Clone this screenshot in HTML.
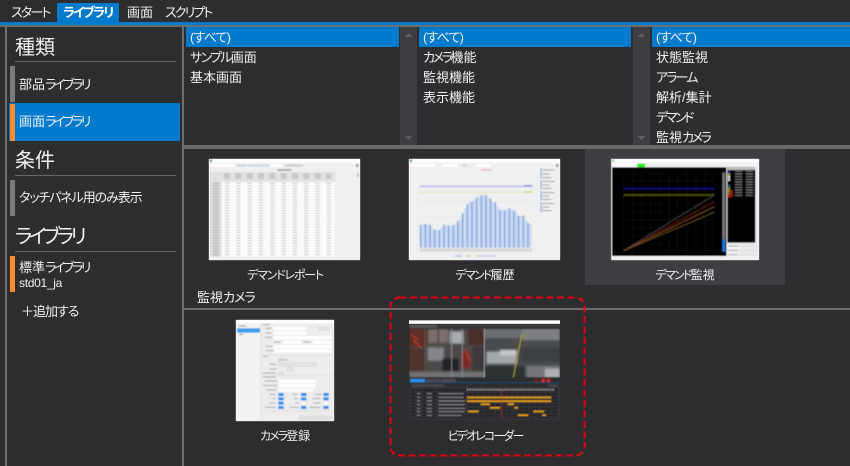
<!DOCTYPE html>
<html lang="ja"><head><meta charset="utf-8"><title>ライブラリ</title>
<style>
html,body{margin:0;padding:0;width:850px;height:466px;overflow:hidden;background:#2d2d30}
#a{position:relative;width:850px;height:466px;overflow:hidden;background:#2d2d30;color:#f1f1f1;font-family:"Liberation Sans","Noto Sans CJK JP",sans-serif;font-size:13px;font-feature-settings:"palt";}
.r{position:absolute}
.t{position:absolute;white-space:nowrap;line-height:20px;height:20px;margin-top:1px}
.h{font-size:20px;line-height:30px;height:30px}
.c{transform:translateX(-50%);font-size:12px}
.l{background:#686868;height:1px;left:15px;width:161px;position:absolute}
.k{letter-spacing:-2.4px}
.k2{letter-spacing:-1.7px}
svg{position:absolute;left:0;top:0}
</style></head><body><div id="a">
<div class="r" style="left:57px;top:3px;width:62px;height:19px;background:#007acc"></div>
<div class="r" style="left:0;top:22px;width:850px;height:3px;background:#007acc"></div>
<div class="r" style="left:0;top:25px;width:850px;height:2px;background:#6e6e6e"></div>
<div class="t" style="left:11px;top:2px;letter-spacing:-1.8px">スタート</div>
<div class="t" style="left:63px;top:2px;font-weight:700;color:#fff;letter-spacing:-1.8px">ライブラリ</div>
<div class="t" style="left:127px;top:2px">画面</div>
<div class="t" style="left:165px;top:2px;letter-spacing:-1.9px">スクリプト</div>

<div class="r" style="left:5px;top:27px;width:2px;height:439px;background:#6e6e6e"></div>
<div class="r" style="left:182px;top:27px;width:2px;height:439px;background:#6e6e6e"></div>

<div class="t h" style="left:15px;top:32px">種類</div><div class="l" style="top:61px"></div>
<div class="r" style="left:10px;top:66px;width:5px;height:36px;background:#7a7a7a"></div>
<div class="t" style="left:19px;top:74px">部品<span class="k">ライブラリ</span></div>
<div class="r" style="left:9px;top:103px;width:171px;height:38px;background:#007acc"></div>
<div class="r" style="left:10px;top:104px;width:5px;height:37px;background:#ff8c32"></div>
<div class="t" style="left:19px;top:111px">画面<span class="k">ライブラリ</span></div>
<div class="t h" style="left:15px;top:145px">条件</div><div class="l" style="top:175px"></div>
<div class="r" style="left:10px;top:180px;width:5px;height:36px;background:#7a7a7a"></div>
<div class="t" style="left:19px;top:187px;letter-spacing:-1.1px">タッチパネル用のみ表示</div>
<div class="t h" style="left:15px;top:221px;letter-spacing:-3.6px">ライブラリ</div><div class="l" style="top:251px"></div>
<div class="r" style="left:10px;top:256px;width:5px;height:36px;background:#ff8c32"></div>
<div class="t" style="left:19px;top:257px">標準<span class="k">ライブラリ</span></div>
<div class="t" style="left:19px;top:272px;font-size:12px;letter-spacing:-.3px">std01_ja</div>
<div class="t" style="left:21px;top:301px;letter-spacing:-1px">＋追加する</div>

<div class="r" style="left:186px;top:27px;width:213px;height:20px;background:#007acc"></div>
<div class="r" style="left:419px;top:27px;width:212px;height:20px;background:#007acc"></div>
<div class="r" style="left:652px;top:27px;width:198px;height:20px;background:#007acc"></div>
<div class="r" style="left:400px;top:27px;width:17px;height:118px;background:#3e3e42"></div>
<div class="r" style="left:633px;top:27px;width:17px;height:118px;background:#3e3e42"></div>
<div class="r" style="left:184px;top:145px;width:666px;height:4px;background:#6a6a6a"></div>
<div class="r" style="left:585px;top:149px;width:200px;height:136px;background:#3e3e42"></div>
<div class="r" style="left:184px;top:308px;width:666px;height:2px;background:#6e6e6e"></div>

<div class="t" style="left:190px;top:27px;letter-spacing:-.8px">(すべて)</div>
<div class="t" style="left:190px;top:47px"><span class="k2">サンプル</span>画面</div>
<div class="t" style="left:190px;top:67px">基本画面</div>
<div class="t" style="left:423px;top:27px;letter-spacing:-.8px">(すべて)</div>
<div class="t" style="left:423px;top:47px"><span class="k">カメラ</span>機能</div>
<div class="t" style="left:423px;top:67px">監視機能</div>
<div class="t" style="left:423px;top:87px">表示機能</div>
<div class="t" style="left:656px;top:27px;letter-spacing:-.8px">(すべて)</div>
<div class="t" style="left:656px;top:47px">状態監視</div>
<div class="t" style="left:656px;top:67px;letter-spacing:-1.8px">アラーム</div>
<div class="t" style="left:656px;top:87px">解析/集計</div>
<div class="t" style="left:656px;top:107px;letter-spacing:-2.4px">デマンド</div>
<div class="r" style="left:652px;top:127px;width:198px;height:18px;overflow:hidden"><div class="t" style="left:4px;top:0">監視<span class="k">カメラ</span></div></div>

<div class="t c" style="left:285px;top:264px;letter-spacing:-1.2px">デマンドレポート</div>
<div class="t c" style="left:485px;top:264px"><span class="k2">デマンド</span>履歴</div>
<div class="t c" style="left:685px;top:264px"><span class="k2">デマンド</span>監視</div>
<div class="t" style="left:197px;top:287px">監視<span style="letter-spacing:-1px">カメラ</span></div>
<div class="t c" style="left:285px;top:425px"><span style="letter-spacing:-1.9px">カメラ</span>登録</div>
<div class="t c" style="left:485px;top:425px;letter-spacing:-1.9px">ビデオレコーダー</div>

<svg width="850" height="466" viewBox="0 0 850 466">
<defs>
<filter id="b" x="-5%" y="-5%" width="110%" height="110%"><feGaussianBlur stdDeviation="1.5"/></filter>
<filter id="p" x="-5%" y="-5%" width="110%" height="110%"><feGaussianBlur stdDeviation="3"/></filter>
<pattern id="tb" width="33.9" height="8.2" patternUnits="userSpaceOnUse" x="65" y="96">
<rect width="33.9" height="8.2" fill="#fbfbfb"/><rect x="10" y="2.5" width="13" height="3" fill="#c6c6c6"/>
</pattern>
<pattern id="lb" width="30" height="8.2" patternUnits="userSpaceOnUse" x="36" y="96">
<rect x="2" y="2" width="20" height="4" fill="#b4b4b4"/>
</pattern>
<clipPath id="c5"><rect x="72" y="116" width="453" height="147"/></clipPath>
</defs>
<g fill="#5d5d62"><path d="M408.5 33l-4 4h8zM408.5 140l-4-4h8zM641.5 33l-4 4h8zM641.5 140l-4-4h8z"/></g>

<!-- thumb 1 -->
<g transform="translate(200,150) scale(.3333)">
<rect x="27" y="27" width="453" height="303" fill="#f0f0f0"/>
<g filter="url(#b)">
<rect x="27" y="27" width="453" height="303" fill="#f0f0f0"/>
<rect x="27" y="27" width="453" height="10" fill="#fff"/><rect x="30" y="29" width="6" height="7" fill="#3a8a4a"/>
<rect x="30" y="42" width="75" height="9" fill="#fff"/>
<rect x="110" y="44" width="30" height="5" fill="#ccc"/>
<rect x="143" y="43" width="72" height="7" fill="#d0d8e4"/>
<rect x="208" y="42" width="40" height="9" fill="#fff"/><rect x="255" y="43" width="55" height="7" fill="#cfcfcf"/>
<rect x="468" y="42" width="7" height="9" fill="#999"/>
<rect x="232" y="57" width="42" height="6" fill="#aaa"/>
<rect x="30" y="66" width="375" height="30" fill="#e2e2e2"/>
<path d="M72 72h320M72 78h320M72 84h320" stroke="#aaa" stroke-width="3" stroke-dasharray="18 16"/>
<rect x="65" y="96" width="339" height="224" fill="url(#tb)"/>
<rect x="30" y="96" width="35" height="224" fill="#e0e0e0"/>
<rect x="36" y="96" width="24" height="224" fill="url(#lb)"/>
<rect x="471" y="68" width="5" height="14" fill="#bbb"/>
</g></g>

<!-- thumb 2 -->
<g transform="translate(400,150) scale(.3333)">
<rect x="27" y="27" width="453" height="303" fill="#f0f0f0"/>
<g filter="url(#b)">
<rect x="27" y="27" width="453" height="303" fill="#f0f0f0"/>
<rect x="27" y="27" width="453" height="10" fill="#fff"/><rect x="30" y="29" width="6" height="7" fill="#3a8a4a"/>
<rect x="30" y="42" width="75" height="9" fill="#fff"/><rect x="128" y="42" width="45" height="9" fill="#fff"/><rect x="186" y="42" width="16" height="9" fill="#ddd"/><rect x="226" y="42" width="45" height="9" fill="#fff"/>
<rect x="243" y="57" width="35" height="5" fill="#f0bcd6"/>
<path d="M58 110h340M58 155h340M58 201h340M58 247h340" stroke="#e2e2e2" stroke-width="1.5"/>
<path d="M58 109h340" stroke="#b4b4f0" stroke-width="4"/>
<path d="M58 127h340" stroke="#dfe8b0" stroke-width="3"/>
<rect x="372" y="105" width="24" height="4" fill="#8f8fe0"/><rect x="372" y="124" width="24" height="4" fill="#c4d680"/>
<path d="M69 293V223M83 293V224M97 293V232M111 293V239M125 293V232M139 293V226M153 293V225M167 293V220M181 293V208M195 293V175M209 293V157M223 293V148M237 293V139M251 293V135M265 293V143M279 293V155M293 293V170M307 293V180M321 293V178M335 293V178M349 293V187M363 293V198M377 293V210M391 293V222" stroke="#c4d6f2" stroke-width="6" fill="none"/>
<path d="M62 293V225M76 293V222M90 293V225M104 293V239M118 293V240M132 293V224M146 293V227M160 293V225M174 293V213M188 293V190M202 293V162M216 293V155M230 293V143M244 293V136M258 293V135M272 293V145M286 293V157M300 293V180M314 293V181M328 293V175M342 293V181M356 293V198M370 293V196M384 293V218" stroke="#7ea4e4" stroke-width="5" fill="none"/>
<rect x="60" y="295" width="336" height="10" fill="#d8d8d8"/>
<rect x="165" y="316" width="20" height="4" fill="#9ab8e8"/><rect x="198" y="316" width="16" height="4" fill="#b8d890"/><rect x="228" y="316" width="60" height="4" fill="#c8c8e8"/>
<g fill="#6f95d6"><rect x="422" y="55" width="3" height="30"/><rect x="422" y="90" width="3" height="28"/><rect x="422" y="123" width="3" height="28"/><rect x="422" y="156" width="3" height="30"/></g>
<path d="M428 60h36M428 72h20M428 83h26M428 94h36M428 105h20M428 115h26M428 128h36M428 138h20M428 148h26M428 161h36M428 171h20M428 182h26" stroke="#9a9a9a" stroke-width="3"/>
<rect x="468" y="42" width="7" height="9" fill="#999"/>
</g></g>

<!-- thumb 3 -->
<g transform="translate(585,150) scale(.3333)">
<rect x="79" y="27" width="443" height="303" fill="#f0f0f0"/>
<g filter="url(#b)">
<rect x="79" y="27" width="443" height="303" fill="#f0f0f0"/>
<rect x="79" y="27" width="443" height="10" fill="#fff"/><rect x="81" y="29" width="6" height="7" fill="#30d040"/>
<rect x="81" y="42" width="74" height="9" fill="#fff"/><rect x="157" y="41" width="23" height="11" fill="#1fe81f"/>
<rect x="81" y="52" width="343" height="266" fill="#000"/>
<path d="M116 70V302M143 70V302M170 70V302M197 70V302M224 70V302M252 70V302M279 70V302M306 70V302M333 70V302M360 70V302M388 70V302M116 70H388M116 93H388M116 140H388M116 163H388M116 187H388M116 210H388M116 233H388M116 257H388M116 280H388M116 302H388" stroke="#1c1c1c" stroke-width="1.5"/>
<path d="M116 116H388" stroke="#0c0c90" stroke-width="4"/>
<path d="M116 135H388" stroke="#4a4a08" stroke-width="5"/>
<path d="M116 302L388 135" stroke="#4d4d4d" stroke-width="2"/>
<path d="M116 302L388 155" stroke="#6e2018" stroke-width="2"/>
<path d="M116 302L388 170" stroke="#905020" stroke-width="2"/>
<path d="M116 302L388 187" stroke="#66581a" stroke-width="2"/>
<rect x="412" y="68" width="8" height="200" fill="#777"/>
<rect x="412" y="268" width="8" height="37" fill="#1e7ee0"/>
<rect x="427" y="52" width="84" height="226" fill="#000"/>
<rect x="427" y="52" width="84" height="8" fill="#bdbdbd"/>
<path d="M450 64h55M450 72h55M450 80h55M450 88h55M450 96h55M450 104h55M450 112h55M450 120h55M450 128h55M450 136h55" stroke="#777" stroke-width="3" stroke-dasharray="22 10"/>
<g><rect x="429" y="62" width="6" height="7" fill="#2020c0"/><rect x="429" y="70" width="6" height="7" fill="#b0b030"/><rect x="429" y="78" width="6" height="7" fill="#eee"/><rect x="429" y="86" width="6" height="7" fill="#ddd"/><rect x="429" y="104" width="6" height="7" fill="#107080"/><rect x="429" y="112" width="6" height="7" fill="#a0a020"/><rect x="429" y="120" width="6" height="7" fill="#c09020"/><rect x="429" y="128" width="6" height="7" fill="#c06020"/><rect x="429" y="136" width="6" height="6" fill="#e02020"/><rect x="438" y="120" width="5" height="22" fill="#a02020"/></g>
<rect x="465" y="284" width="50" height="9" fill="#e4e4e4"/><rect x="465" y="297" width="50" height="9" fill="#e4e4e4"/><rect x="465" y="310" width="50" height="8" fill="#e4e4e4"/>
<path d="M430 288h30M430 301h30M430 314h30" stroke="#aaa" stroke-width="3"/>
</g></g>

<!-- thumb 4 -->
<g transform="translate(190,285) scale(.3333)">
<rect x="138" y="105" width="294" height="303" fill="#f0f0f0"/>
<g filter="url(#b)">
<rect x="138" y="105" width="294" height="303" fill="#ededed"/>
<rect x="138" y="105" width="294" height="10" fill="#fff"/>
<rect x="138" y="115" width="74" height="293" fill="#f3f3f3"/>
<rect x="141" y="130" width="69" height="13" fill="#3a9bf0"/>
<rect x="146" y="121" width="22" height="4" fill="#aaa"/><rect x="148" y="146" width="10" height="4" fill="#999"/>
<g fill="#fff"><rect x="250" y="125" width="100" height="10"/><rect x="250" y="139" width="100" height="10"/><rect x="250" y="153" width="174" height="10"/><rect x="278" y="167" width="55" height="10"/><rect x="368" y="167" width="56" height="10"/><rect x="250" y="180" width="174" height="10"/><rect x="250" y="193" width="174" height="10"/><rect x="266" y="284" width="112" height="10"/><rect x="266" y="297" width="112" height="10"/><rect x="266" y="311" width="102" height="9"/></g>
<g fill="#e2e2e2" stroke="#c8c8c8"><rect x="266" y="233" width="114" height="11"/><rect x="292" y="247" width="18" height="11"/><rect x="265" y="261" width="16" height="8"/><rect x="328" y="393" width="32" height="11"/><rect x="364" y="393" width="26" height="11"/><rect x="393" y="393" width="32" height="11"/><rect x="386" y="127" width="30" height="8"/></g>
<path d="M216 211h212M216 271h212M216 378h216M212 115v293" stroke="#d6d6d6" stroke-width="1.5"/>
<path d="M218 118h22M226 130h18M226 144h18M226 157h20M252 171h20M340 171h22M228 184h20M228 197h24M240 238h20M240 252h20M218 264h40M224 288h36M218 301h44M228 315h30M240 328h16M308 328h16M375 328h20M248 341h8M312 341h12M366 341h26M238 354h16M316 354h12M370 354h22M226 367h30M300 367h26M358 367h34M275 225h18M218 214h16M218 276h40" stroke="#a8a8a8" stroke-width="3"/>
<rect x="266" y="221" width="7" height="7" fill="#fff" stroke="#555"/>
<g fill="#2f8fee"><rect x="265" y="324" width="16" height="9"/><rect x="333" y="324" width="16" height="9"/><rect x="400" y="324" width="16" height="9"/><rect x="265" y="337" width="16" height="9"/><rect x="333" y="337" width="16" height="9"/><rect x="400" y="337" width="16" height="9"/><rect x="265" y="350" width="16" height="9"/><rect x="265" y="363" width="16" height="9"/><rect x="333" y="363" width="16" height="9"/><rect x="400" y="363" width="16" height="9"/></g>
<g fill="#fff" stroke="#ccc"><rect x="333" y="350" width="16" height="9"/><rect x="400" y="350" width="16" height="9"/></g>
</g></g>

<!-- thumb 5 -->
<g transform="translate(385,290) scale(.3333)">
<rect x="72" y="91" width="453" height="299" fill="#2d2d30"/>
<rect x="72" y="91" width="453" height="11" fill="#fff"/>
<g filter="url(#b)">
<rect x="72" y="102" width="453" height="14" fill="#3a3a3e"/>
<rect x="75" y="104" width="80" height="10" fill="#555"/>
</g>
<g clip-path="url(#c5)"><g filter="url(#p)">
<rect x="72" y="116" width="226" height="147" fill="#4c4846"/>
<rect x="72" y="116" width="55" height="55" fill="#5e2e28"/>
<rect x="130" y="118" width="60" height="40" fill="#7c6e6c"/>
<rect x="195" y="125" width="40" height="35" fill="#a8acb0"/>
<rect x="250" y="116" width="48" height="50" fill="#4a2e2a"/>
<rect x="72" y="176" width="50" height="87" fill="#4e302c"/>
<rect x="128" y="172" width="48" height="40" fill="#84868a"/>
<rect x="172" y="205" width="50" height="40" fill="#242426"/>
<rect x="228" y="185" width="28" height="50" fill="#7a2a24"/>
<rect x="262" y="170" width="36" height="93" fill="#3c383a"/>
<rect x="72" y="245" width="226" height="18" fill="#727272"/>
<rect x="299" y="116" width="226" height="147" fill="#4a4c50"/>
<rect x="299" y="116" width="110" height="28" fill="#6a6e72"/>
<rect x="410" y="116" width="115" height="34" fill="#7e8082"/>
<rect x="305" y="185" width="90" height="36" fill="#a4a8ac"/>
<rect x="345" y="180" width="50" height="16" fill="#c4c8cc"/>
<rect x="405" y="172" width="120" height="44" fill="#3e4044"/>
<rect x="299" y="228" width="120" height="35" fill="#2e3033"/>
<rect x="425" y="228" width="100" height="35" fill="#74767a"/>
<rect x="480" y="236" width="45" height="27" fill="#aeb0b2"/>
</g>
<g filter="url(#b)">
<path d="M411 130L385 263" stroke="#a89a30" stroke-width="4"/>
<path d="M200 116v147M232 116v147" stroke="#848a92" stroke-width="5" opacity=".7"/>
<path d="M120 116v130M160 116v60" stroke="#55504e" stroke-width="5"/>
<path d="M80 135l20 15M85 150l25 25M240 175l15 40" stroke="#b03a28" stroke-width="5"/>
</g>
</g>
<g filter="url(#b)">
<rect x="297" y="116" width="2" height="147" fill="#ddd"/>
<rect x="75" y="266" width="45" height="11" fill="#2f8fee"/>
<rect x="122" y="266" width="44" height="11" fill="#4a4a50"/><rect x="168" y="266" width="44" height="11" fill="#4a4a50"/>
<rect x="72" y="277" width="453" height="2" fill="#1c5a90"/>
<rect x="446" y="266" width="14" height="10" fill="#6a2020"/><rect x="469" y="266" width="11" height="10" fill="#e02020"/><rect x="485" y="266" width="11" height="10" fill="#e02020"/>
<rect x="78" y="283" width="100" height="7" fill="#4a4a4e"/><rect x="490" y="283" width="30" height="7" fill="#4a4a4e"/>
<rect x="75" y="293" width="447" height="95" fill="#26262a" stroke="#5a5a5e"/>
<path d="M75 306h447M75 318h447M75 329h447M75 340h447M75 350h447M75 361h447M75 372h447M75 381h447" stroke="#4a4a4e" stroke-width="1.2"/>
<path d="M92 293v90M112 293v90M155 293v90M245 293v90M262 298v85M279 298v85M296 298v85M313 298v85M330 298v85M347 298v85M364 298v85M381 298v85M398 298v85M415 298v85M432 298v85M449 298v85M466 298v85M483 298v85M500 298v85" stroke="#45454a" stroke-width="1.2"/>
<path d="M96 311h10M96 322h10M96 333h10M96 344h10M96 355h10M96 365h10M96 376h10M125 311h16M125 322h16M125 333h16M125 344h16M125 355h16M125 365h16M125 376h16M160 311h76M160 322h76M160 333h80M160 344h80M160 355h80M160 365h80M160 376h70" stroke="#8a8a8e" stroke-width="3"/>
<path d="M246 299h262" stroke="#aaa" stroke-width="4" stroke-dasharray="5 3"/>
<g fill="#e8a010"><rect x="246" y="320" width="252" height="5"/><rect x="246" y="331" width="252" height="5"/><rect x="287" y="340" width="28" height="5"/><rect x="368" y="340" width="19" height="5"/><rect x="315" y="351" width="30" height="5"/><rect x="388" y="351" width="11" height="5"/><rect x="249" y="362" width="32" height="5"/><rect x="445" y="362" width="32" height="5"/><rect x="399" y="373" width="30" height="5"/><rect x="472" y="373" width="11" height="5"/></g>
<path d="M350 298v85" stroke="#c02020" stroke-width="1.5"/>
</g></g>

<rect x="390.5" y="297.5" width="194" height="158" rx="9" ry="9" fill="none" stroke="#e4000f" stroke-width="2" stroke-dasharray="7 3.5"/>
</svg>
</div></body></html>
